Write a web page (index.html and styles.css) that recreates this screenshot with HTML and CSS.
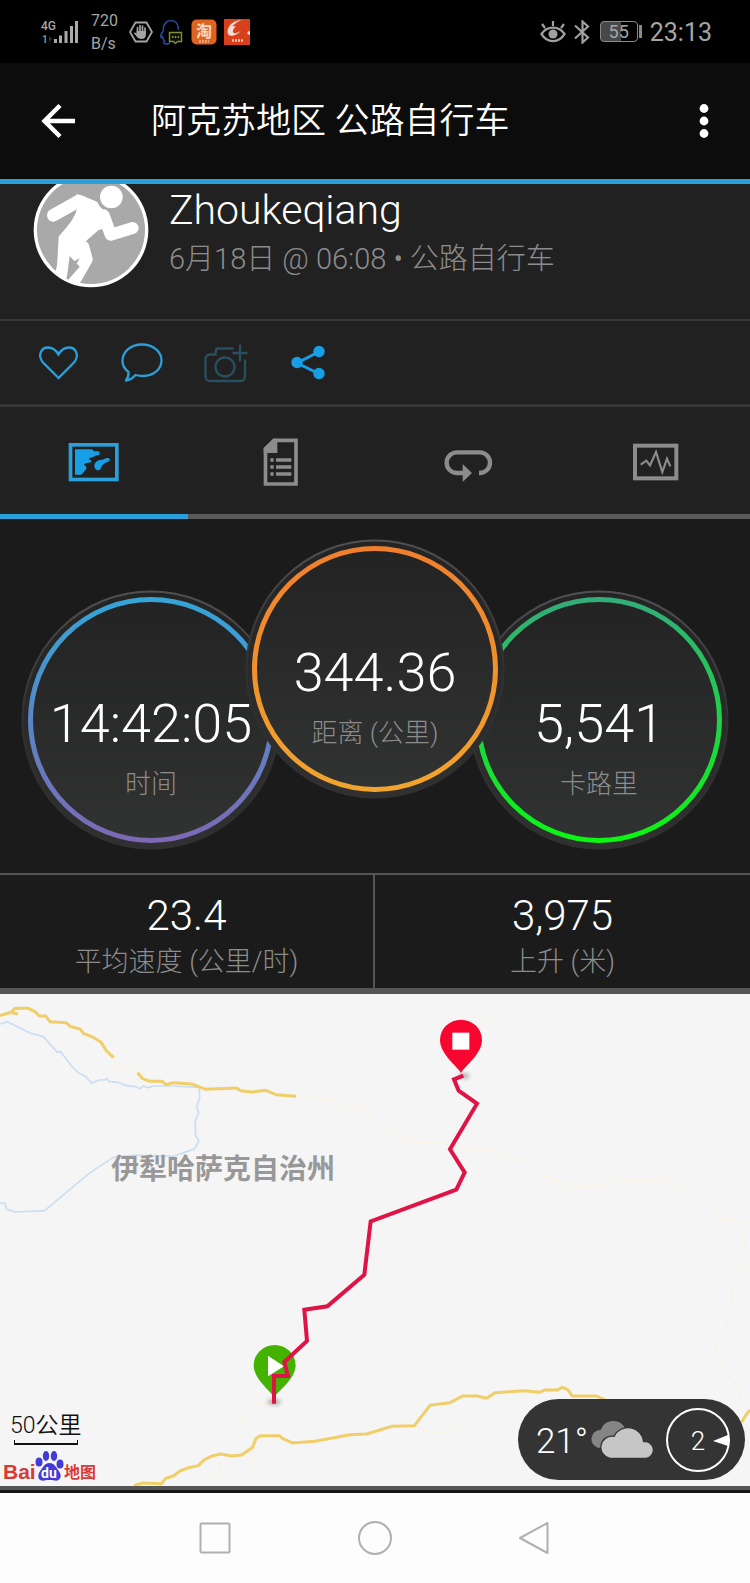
FILE: index.html
```html
<!DOCTYPE html>
<html lang="zh-CN">
<head>
<meta charset="utf-8">
<meta name="viewport" content="width=device-width, initial-scale=1">
<title>阿克苏地区 公路自行车</title>
<link rel="stylesheet" href="styles.css">
</head>
<body>
<div class="statusbar">
  <div class="status-left">
    <svg class="signal" width="40" height="26" viewBox="0 0 40 26" aria-hidden="true">
      <text class="signal-text" x="1" y="11">4G</text>
      <text class="signal-text small" x="2" y="24">1</text>
      <path d="M9 17v6l3-3z" fill="#333"/>
      <path d="M15.500 20v4M20.500 16.500V24M26 12V24M31.500 7V24M36.500 2V24" stroke="#aaa" stroke-width="3"/>
    </svg>
    <div class="netspeed"><span>720</span><span>B/s</span></div>
    <svg width="24" height="24" viewBox="0 0 24 24" aria-hidden="true">
      <path d="M6.500 2.500h11L23 12l-5.500 9.500h-11L1 12z" fill="none" stroke="#a5a5a5" stroke-width="1.800"/>
      <path d="M8.500 13V7.500M11 12V5.500M13.500 12V6M16 13V8" stroke="#a5a5a5" stroke-width="1.700" stroke-linecap="round"/>
      <path d="M7.600 11h9.300v3.500c0 3-1.700 4.500-4.500 4.500-2.500 0-3.500-1-4.700-2.500L4.800 13c.8-1 1.600-.6 2.800.8z" fill="#a5a5a5"/>
    </svg>
    <svg width="24" height="26" viewBox="0 0 24 26" aria-hidden="true">
      <path d="M5 22c-1.500 1-2 2-.5 2.600C6 25 8.500 25 10 24M5 22c-2-1-2.200-2-2.500-4-1 1.500-2 .5-1.500-2 .4-1.700 1.200-2.800 2.200-4C3 5 6.500 1.500 11 1.500S18.500 5 18.500 11" fill="none" stroke="#234a94" stroke-width="1.600"/>
      <path d="M9.500 13.500h12v9h-4l-2 2-2-2h-4z" fill="#0c1008" stroke="#7d9138" stroke-width="1.400"/>
      <path d="M12 18h1.500M14.800 18h1.500M17.600 18h1.500" stroke="#a5bf4a" stroke-width="1.500"/>
    </svg>
    <svg width="26" height="26" viewBox="0 0 26 26" aria-hidden="true">
      <rect x="0.500" y="0.500" width="25" height="25" rx="5" fill="#df6420"/>
      <text class="tb-text" x="13" y="18" text-anchor="middle">淘</text>
      <path d="M8 22.500h10" stroke="#f0a070" stroke-width="3" stroke-dasharray="2 1"/>
    </svg>
    <svg width="26" height="26" viewBox="0 0 26 26" aria-hidden="true">
      <rect width="26" height="26" fill="#d8401c"/>
      <path d="M18 1C10 1 4 6 3.500 12.500 3.300 16 6 17.500 9.500 16.500c3-.8 5.500-2.500 7.500-4.700-3 1.800-6 3-7.500 2C8 12.500 9.500 9.500 12 7c-1.500.4-2.500.3-3.500 0C11 4.500 14 2 18 1z" fill="#f5ddd4"/>
      <path d="M26 12c-2 0-3 1.500-2.500 3l2.500 1z" fill="#f5ddd4"/>
      <path d="M8 21.500h11" stroke="#f5c4b4" stroke-width="2.500" stroke-dasharray="2 1"/>
    </svg>
  </div>
  <div class="status-right">
    <svg width="26" height="24" viewBox="0 0 26 24" aria-hidden="true">
      <path d="M1.500 14C7 5.500 19 5.500 24.500 14 19 23.500 7 23.500 1.500 14z" fill="none" stroke="#a0a0a0" stroke-width="2.400"/>
      <circle cx="13" cy="14" r="4.500" fill="#a0a0a0"/>
      <path d="M13 1v5M2 4l3 4M24 4l-3 4" stroke="#a0a0a0" stroke-width="2.200"/>
    </svg>
    <svg width="18" height="24" viewBox="0 0 18 24" aria-hidden="true">
      <path d="M2 5.500L15 17.500 9.500 22.500V1.500L15 6.500 2 18.500" fill="none" stroke="#a0a0a0" stroke-width="2.200"/>
    </svg>
    <div class="battery"><span>55</span></div>
    <span class="clock">23:13</span>
  </div>
</div>

<header class="appbar">
  <button class="icon-btn" aria-label="返回">
    <svg width="36" height="36" viewBox="0 0 36 36"><path d="M34 18H4M19 2.500L3.500 18 19 33.500" fill="none" stroke="#fff" stroke-width="4.500"/></svg>
  </button>
  <h1 class="title">阿克苏地区 公路自行车</h1>
  <button class="icon-btn" aria-label="更多">
    <svg width="10" height="36" viewBox="0 0 10 36" fill="#fff"><circle cx="5" cy="5.500" r="4.400"/><circle cx="5" cy="18" r="4.400"/><circle cx="5" cy="30.500" r="4.400"/></svg>
  </button>
</header>

<main class="content">
  <section class="profile">
    <svg class="avatar" width="116" height="116" viewBox="0 0 348 348" aria-hidden="true">
      <defs><clipPath id="face"><circle cx="174" cy="174" r="164"/></clipPath></defs>
      <circle cx="174" cy="174" r="172" fill="#fff"/>
      <circle cx="174" cy="174" r="162" fill="#a9a9a9"/>
      <g clip-path="url(#face)">
        <circle cx="235" cy="75" r="34" fill="#fff"/>
        <g fill="none" stroke="#fff" stroke-linecap="round" stroke-linejoin="round">
          <path d="M61 130L136 88 180 105" stroke-width="38"/>
          <path d="M212 130L233 188 299 168" stroke-width="36"/>
          <path d="M104 222L86 305M150 225L160 262 112 345" stroke-width="38"/>
        </g>
        <path d="M133 70C180 82 220 115 232 160L195 172 140 220 160 245 75 290 80 195C105 165 130 140 136 106z" fill="#fff" stroke="#fff" stroke-width="6" stroke-linejoin="round"/>
        <path d="M110 252L100 330 140 284z" fill="#a9a9a9"/>
      </g>
    </svg>
    <div class="who">
      <h2 class="name">Zhoukeqiang</h2>
      <p class="meta">6月18日 @ 06:08 • 公路自行车</p>
    </div>
  </section>

  <div class="actions">
    <button class="action" aria-label="赞">
      <svg width="48" height="48" viewBox="0 0 48 48"><path d="M23.500 39L8 23.500C2 16 6.500 8.500 13 8.500c4.500 0 8 2.500 10.500 7 2.500-4.500 6-7 10.500-7C40.500 8.500 45 16 39 23.500z" fill="none" stroke="#2b9fd9" stroke-width="2.300"/></svg>
    </button>
    <button class="action" aria-label="评论">
      <svg width="48" height="48" viewBox="0 0 48 48"><path d="M10.500 33C6.500 30 4.500 26.500 4.500 22 4.500 12.500 13 5.500 24 5.500s19.500 7 19.500 16-8.500 15.500-18.500 15.500c-3 0-5-.3-7.500-1-2.500 3-5.500 5-9.500 5.500 2-2.500 2.700-5.500 2.500-8.500z" fill="none" stroke="#2b9fd9" stroke-width="2.300" stroke-linejoin="round"/></svg>
    </button>
    <button class="action" aria-label="添加照片" disabled>
      <svg width="48" height="48" viewBox="0 0 48 48" fill="none" stroke="#28505f" stroke-width="2.300"><path d="M32.500 9.500H17c-1 0-2 .8-2 2l-.5 4H9c-2.500 0-4.500 2-4.500 4.500V37.500c0 2.500 2 4.500 4.500 4.500h30.500c2.500 0 4.500-2 4.500-4.500V20.500M39 5.500v17M31.500 14h15"/><circle cx="24" cy="28" r="9.500"/></svg>
    </button>
    <button class="action" aria-label="分享">
      <svg width="48" height="48" viewBox="0 0 48 48"><path d="M35.500 12.500L13 24l22.500 11" fill="none" stroke="#169fe6" stroke-width="3"/><g fill="#169fe6"><circle cx="13" cy="23.500" r="5.700"/><circle cx="35" cy="12.500" r="5.700"/><circle cx="35" cy="34.500" r="5.700"/></g></svg>
    </button>
  </div>

  <nav class="tabs">
    <button class="tab active" aria-label="地图">
      <svg width="56" height="56" viewBox="198 98 168 168"><rect x="211.500" y="133.500" width="139" height="104" fill="none" stroke="#2b9fd9" stroke-width="11"/><path d="M225 147h50c4 0 4 6 8 6h11c7 0 7 12 0 12-9 0-14 7-22 7-5 0-6 5 0 8 6 4 0 7-6 7-8 0-14 3-14 8 8 0 9 9 5 13-7 5-8 15-16 15h-16z" fill="#169fe6"/><path d="M284 190c4-8 14-12 21-12 8 0 10-5 18-5 8 0 9 8 1 11-16 5-19 14-23 23-6 7-22 0-17-17z" fill="#169fe6"/></svg>
    </button>
    <button class="tab" aria-label="详情">
      <svg width="56" height="56" viewBox="759 98 168 168"><path d="M822 120h66v131H796.500V145z" fill="none" stroke="#8c8c8c" stroke-width="11"/><path d="M832 115v43h-41v-14l31-29z" fill="#8c8c8c"/><path d="M811 179h10M828 179h46M811 200h10M828 200h46M811 221h10M828 221h46" stroke="#8c8c8c" stroke-width="10"/></svg>
    </button>
    <button class="tab" aria-label="计圈">
      <svg width="56" height="56" viewBox="198 98 168 168"><path d="M265 218H246a31 31 0 0 1 0-62h68a31 31 0 0 1 0 62h-2" fill="none" stroke="#8c8c8c" stroke-width="13"/><path d="M263 191v54l28-27z" fill="#8c8c8c"/></svg>
    </button>
    <button class="tab" aria-label="图表">
      <svg width="56" height="56" viewBox="759 98 168 168"><rect x="780" y="136" width="124" height="98" fill="none" stroke="#8c8c8c" stroke-width="12"/><path d="M797 193l17-12 11 14 18-40 19 60 14-40 10 23" fill="none" stroke="#8c8c8c" stroke-width="6.500"/></svg>
    </button>
  </nav>

  <section class="dials">
    <svg class="defs" width="0" height="0" aria-hidden="true">
      <defs>
        <linearGradient id="disc" x1="0" y1="0" x2="0" y2="1"><stop offset="0" stop-color="#232323"/><stop offset="1" stop-color="#313232"/></linearGradient>
        <linearGradient id="rim" x1="0" y1="0" x2="0" y2="1"><stop offset="0" stop-color="#505050"/><stop offset=".5" stop-color="#303030"/><stop offset="1" stop-color="#303030"/></linearGradient>
        <linearGradient id="blue" x1="0" y1="0" x2="0" y2="1"><stop offset="0" stop-color="#34a5d8"/><stop offset="1" stop-color="#7d68b4"/></linearGradient>
        <linearGradient id="orange" x1="0" y1="0" x2="0" y2="1"><stop offset="0" stop-color="#f07f2d"/><stop offset="1" stop-color="#f0a42e"/></linearGradient>
        <linearGradient id="green" x1="0" y1="0" x2="0" y2="1"><stop offset="0" stop-color="#33ad79"/><stop offset="1" stop-color="#0cf514"/></linearGradient>
        <linearGradient id="bevel" x1="0" y1="0" x2="0" y2="1"><stop offset="0" stop-color="#242424"/><stop offset="1" stop-color="#303030"/></linearGradient>
      </defs>
    </svg>
    <div class="dial">
      <svg class="ring" viewBox="0 0 260 260" aria-hidden="true"><circle cx="130" cy="130" r="128.500" fill="url(#bevel)" stroke="url(#rim)" stroke-width="2"/><circle cx="130" cy="130" r="120.500" fill="url(#disc)" stroke="url(#blue)" stroke-width="5"/></svg>
      <div class="reading"><span class="value">14:42:05</span><span class="label">时间</span></div>
    </div>
    <div class="dial main">
      <svg class="ring" viewBox="0 0 260 260" aria-hidden="true"><circle cx="130" cy="130" r="128.500" fill="url(#bevel)" stroke="url(#rim)" stroke-width="2"/><circle cx="130" cy="130" r="120.500" fill="url(#disc)" stroke="url(#orange)" stroke-width="5"/></svg>
      <div class="reading"><span class="value">344.36</span><span class="label">距离 (公里)</span></div>
    </div>
    <div class="dial">
      <svg class="ring" viewBox="0 0 260 260" aria-hidden="true"><circle cx="130" cy="130" r="128.500" fill="url(#bevel)" stroke="url(#rim)" stroke-width="2"/><circle cx="130" cy="130" r="120.500" fill="url(#disc)" stroke="url(#green)" stroke-width="5"/></svg>
      <div class="reading"><span class="value">5,541</span><span class="label">卡路里</span></div>
    </div>
  </section>

  <section class="facts">
    <div class="fact"><span class="fact-value">23.4</span><span class="fact-label">平均速度 (公里/时)</span></div>
    <div class="fact"><span class="fact-value">3,975</span><span class="fact-label">上升 (米)</span></div>
  </section>

  <section class="map">
    <svg class="map-canvas" viewBox="0 0 750 492" preserveAspectRatio="xMidYMid slice" role="img" aria-label="路线地图">
      <defs><filter id="soft" x="-50%" y="-80%" width="200%" height="260%"><feGaussianBlur stdDeviation="6"/></filter></defs>
      <rect width="750" height="492" fill="#f5f5f5"/>
      <g transform="scale(.33333)" fill="none" stroke-linejoin="round">
        <g stroke="#f7f3e8" stroke-width="6">
          <path d="M888 307L1010 322 1030 340 1090 342 1125 378 1200 425 1260 446 1330 446 1420 470 1480 470 1590 505 1620 540 1720 576 1810 576 1850 560 1990 560 2070 586 2120 605 2160 672 2230 685 2235 760 2210 830 2190 940 2180 990 2145 1060 2170 1130 2215 1180 2225 1240"/>
          <path d="M1510 18L1490 70 1450 90M345 195V260M345 200L410 235M1245 1295L1300 1315 1350 1318 1430 1275M665 1400L645 1470M760 1360V1470M725 1285L760 1235 850 1215"/>
        </g>
        <path d="M0 90L22 83 90 117 130 128 172 175 182 173 215 217 235 236 258 248 275 268 298 258 314 258 320 254 326 262 358 266 380 275 408 278 420 284 430 276 444 281 460 276 520 276 598 280 599 310 590 340 596 355 585 385 587 425 597 440 583 465 550 476 520 487 400 483 340 490 270 536 134 650 46 654 20 646 14 627H0" stroke="#ccddf3" stroke-width="5"/>
        <g stroke="#f0ce68" stroke-width="9">
          <path d="M0 65L35 54 45 43 85 43 105 53 118 66 137 66 150 83 198 86 212 98 240 105 252 119 278 129 303 145 320 171 341 191M35 56L54 60"/>
          <path d="M413 236L428 254 450 262 487 262 498 272 520 266 575 270 617 286 710 282 722 290 755 294 797 289 828 302 888 307"/>
          <path d="M402 1475L428 1467 485 1469 497 1453 520 1446 540 1431 560 1423 595 1415 612 1398 635 1386 662 1380 695 1386 725 1383 758 1360 767 1335 780 1325 838 1325 850 1335 877 1347 945 1342 1050 1322 1100 1320 1175 1297 1243 1295 1290 1234 1350 1226 1388 1206 1432 1206 1460 1213 1485 1196 1575 1190 1618 1195 1635 1188 1672 1188 1687 1180 1703 1187 1717 1206 1790 1206 1830 1225"/>
          <path d="M2225 1285L2240 1260 2250 1248"/>
        </g>
        <ellipse cx="1393" cy="246" rx="15" ry="6" fill="#999" filter="url(#soft)"/>
        <ellipse cx="822" cy="1224" rx="20" ry="7" fill="#999" filter="url(#soft)"/>
        <path d="M1383 237C1373 218 1320 180 1320 138a63 61 0 0 1 126 0C1446 180 1393 218 1383 237z" fill="#f7062f"/>
        <rect x="1357" y="116" width="51" height="51" fill="#fff"/>
        <path d="M823 1210C813 1192 761 1155 761 1114a63 61 0 0 1 126 0C887 1155 833 1192 823 1210z" fill="#43b201"/>
        <path d="M804 1085l48 32-48 30z" fill="#fff"/>
        <path d="M1390 245L1362 256 1376 290 1431 329 1350 466 1394 535 1369 587 1112 682 1093 842 982 937 913 947 921 1041 853 1104 864 1146 822 1146V1229" stroke="#df1345" stroke-width="12" stroke-linejoin="miter"/>
      </g>
      <text class="region" x="111" y="185">伊犁哈萨克自治州</text>
    </svg>
    <div class="map-credit">
      <div class="scale">50公里</div>
      <svg width="94" height="32" viewBox="0 0 94 32" role="img" aria-label="Baidu 地图">
        <text class="bd" x="0" y="29">Bai</text>
        <g fill="#423bd8"><ellipse cx="36" cy="12" rx="3.500" ry="4.500"/><ellipse cx="43" cy="6" rx="3.200" ry="5"/><ellipse cx="51" cy="6" rx="3.200" ry="5"/><ellipse cx="57" cy="14" rx="3.500" ry="4.500"/><path d="M46.500 13c5 0 7 5 10 9 3 5 0 9.500-5 8.500-3-.6-7-.6-10 0-5 1-8-3-5-8.500 3-4 5-9 10-9z"/></g>
        <text class="du" x="38" y="28">du</text>
        <text class="bd-cn" x="61" y="28">地图</text>
      </svg>
    </div>
    <div class="weather">
      <span class="temp">21°</span>
      <svg class="clouds" width="66" height="40" viewBox="0 0 198 120" aria-hidden="true">
        <path d="M30 83a27 27 0 0 1 8-53 40 40 0 0 1 72-8l10 61z" fill="#858585"/>
        <path d="M66 115a33 33 0 0 1 12-66 47 47 0 0 1 89 16 25 25 0 0 1 8 50z" fill="#c6c6c6" stroke="#343434" stroke-width="4"/>
      </svg>
      <svg width="66" height="66" viewBox="0 0 66 66" role="img" aria-label="风速 2">
        <circle cx="33" cy="33" r="31" fill="none" stroke="#fff" stroke-width="2"/>
        <path d="M48 34l15-6v11z" fill="#fff"/>
        <text class="wind" x="33" y="43" text-anchor="middle">2</text>
      </svg>
    </div>
  </section>
</main>

<nav class="sysnav">
  <button class="key" aria-label="最近任务"><svg width="36" height="36" viewBox="0 0 36 36"><rect x="3.500" y="3.500" width="29" height="29" rx="1" fill="none" stroke="#b0b0b0" stroke-width="2"/></svg></button>
  <button class="key" aria-label="主屏幕"><svg width="36" height="36" viewBox="0 0 36 36"><circle cx="18" cy="18" r="16" fill="none" stroke="#b0b0b0" stroke-width="2"/></svg></button>
  <button class="key" aria-label="返回上一级"><svg width="36" height="36" viewBox="0 0 36 36"><path d="M30.500 3L3 18l27.500 15z" fill="none" stroke="#b0b0b0" stroke-width="2" stroke-linejoin="round"/></svg></button>
</nav>
</body>
</html>
```

FILE: styles.css
```css
* {
  box-sizing: border-box;
}

body {
  margin: 0;
  min-height: 100vh;
  display: flex;
  flex-direction: column;
  background: #1b1b1b;
  color: #fff;
  font-family: Roboto, "Noto Sans CJK SC", sans-serif;
  font-weight: 300;
}

button {
  margin: 0;
  padding: 0;
  border: 0;
  background: none;
  display: flex;
  align-items: center;
  justify-content: center;
  cursor: pointer;
}

svg {
  display: block;
  flex: none;
}

h1, h2, p {
  margin: 0;
  font-weight: 300;
}

/* Status bar */
.statusbar {
  height: 63px;
  padding: 0 38px 0 40px;
  display: flex;
  align-items: center;
  justify-content: space-between;
  background: #000;
  color: #a5a5a5;
}

.status-left {
  display: flex;
  align-items: center;
  gap: 7px;
}

.signal-text {
  font-size: 12px;
  font-weight: 500;
  fill: #a5a5a5;
}

.signal-text.small {
  font-size: 10px;
}

.netspeed {
  width: 35px;
  padding-left: 4px;
  display: flex;
  flex-direction: column;
  font-size: 16px;
  font-weight: 400;
  line-height: 23px;
}

.tb-text {
  font-size: 16px;
  font-weight: 700;
  fill: #f8d9c6;
}

.status-right {
  display: flex;
  align-items: center;
  gap: 7px;
}

.battery {
  position: relative;
  width: 38px;
  height: 21px;
  margin: 0 5px 0 2px;
  border: 1px solid #8a8a8a;
  border-radius: 4px;
  background: linear-gradient(90deg, #484848 55%, transparent 55%);
  font-size: 18px;
  font-weight: 400;
  line-height: 19px;
  text-align: center;
}

.battery::after {
  content: "";
  position: absolute;
  right: -5px;
  top: 3px;
  width: 3px;
  height: 13px;
  background: #8a8a8a;
}

.clock {
  padding-top: 2px;
  font-size: 25px;
  font-weight: 400;
}

/* App bar */
.appbar {
  height: 121px;
  padding: 0 41px;
  display: flex;
  align-items: center;
  background: #0c0c0c;
  border-bottom: 5px solid #2b9fd9;
}

.title {
  flex: 1;
  padding: 2px 0 0 74px;
  font-size: 35px;
  font-weight: 350;
  line-height: 48px;
}

/* Activity */
.content {
  flex: 1;
  display: flex;
  flex-direction: column;
}

.profile {
  height: 137px;
  padding-left: 33px;
  display: flex;
  overflow: hidden;
  background: #212121;
  border-bottom: 2px solid #363636;
}

.avatar {
  margin-top: -12px;
}

.who {
  padding-left: 20px;
}

.name {
  font-size: 41px;
  line-height: 53px;
}

.meta {
  color: #8c8c8c;
  font-size: 29px;
  line-height: 44px;
}

.actions {
  height: 86px;
  padding-left: 17px;
  display: flex;
  background: #212121;
  border-bottom: 3px solid #363636;
}

.action {
  width: 83px;
}

.tabs {
  height: 112px;
  display: flex;
  background: #212121;
}

.tab {
  flex: 1;
  border-bottom: 5px solid #5a5a5a;
}

.tab.active {
  border-bottom-color: #2b9fd9;
}

.dials {
  padding: 20px 0 23px;
  display: flex;
  justify-content: center;
  align-items: flex-end;
}

.defs {
  position: absolute;
}

.dial {
  width: 260px;
  display: grid;
}

.dial.main {
  z-index: 1;
  margin: 0 -36px 51px;
}

.ring,
.reading {
  grid-area: 1 / 1;
}

.reading {
  padding-top: 100px;
  display: flex;
  flex-direction: column;
  align-items: center;
  z-index: 1;
}

.value {
  font-size: 54px;
  line-height: 68px;
}

.label {
  padding-top: 8px;
  color: #8c8c8c;
  font-size: 26px;
  line-height: 36px;
}

.facts {
  display: grid;
  grid-template-columns: 1fr 1fr;
  border-top: 2px solid #555;
  border-bottom: 6px solid #555;
}

.fact {
  height: 113px;
  padding-top: 15px;
  display: flex;
  flex-direction: column;
  align-items: center;
}

.fact:first-child {
  border-right: 2px solid #555;
}

.fact-value {
  font-size: 42px;
  line-height: 52px;
}

.fact-label {
  color: #8c8c8c;
  font-size: 27px;
  line-height: 40px;
}

/* Map */
.map {
  position: relative;
  flex: 1;
  min-height: 492px;
  overflow: hidden;
  background: #f5f5f5;
}

.map-canvas {
  position: absolute;
  inset: 0;
  width: 100%;
  height: 100%;
}

.region {
  font-size: 28px;
  font-weight: 700;
  fill: #989898;
}

.map-credit {
  position: absolute;
  left: 3px;
  bottom: 4px;
  display: flex;
  flex-direction: column;
  gap: 5px;
  color: #111;
}

.scale {
  width: 76px;
  padding-left: 7px;
  font-size: 23px;
  font-weight: 350;
  line-height: 28px;
  white-space: nowrap;
}

.scale::after {
  content: "";
  display: block;
  width: 62px;
  height: 3px;
  margin-left: 4px;
  border: solid #111;
  border-width: 0 1px 2px;
}

.bd {
  font-family: "Liberation Sans", sans-serif;
  font-size: 21px;
  font-weight: 700;
  fill: #d83a38;
}

.bd-cn {
  font-size: 16px;
  font-weight: 700;
  fill: #d83a38;
}

.du {
  font-size: 14px;
  font-weight: 700;
  fill: #fff;
}

.weather {
  position: absolute;
  right: 5px;
  bottom: 6px;
  height: 81px;
  padding: 0 14px 0 18px;
  display: flex;
  align-items: center;
  border-radius: 41px;
  background: #343434;
}

.temp {
  padding-top: 4px;
  font-size: 35px;
}

.clouds {
  margin-right: 11px;
}

.wind {
  font-size: 26px;
  fill: #fff;
}

/* System navigation */
.sysnav {
  height: 97px;
  display: flex;
  justify-content: center;
  border-top: 4px solid #555;
  background: #fdfdfd;
  box-shadow: inset 0 3px #161616;
}

.key {
  width: 160px;
  padding-top: 3px;
}
```
